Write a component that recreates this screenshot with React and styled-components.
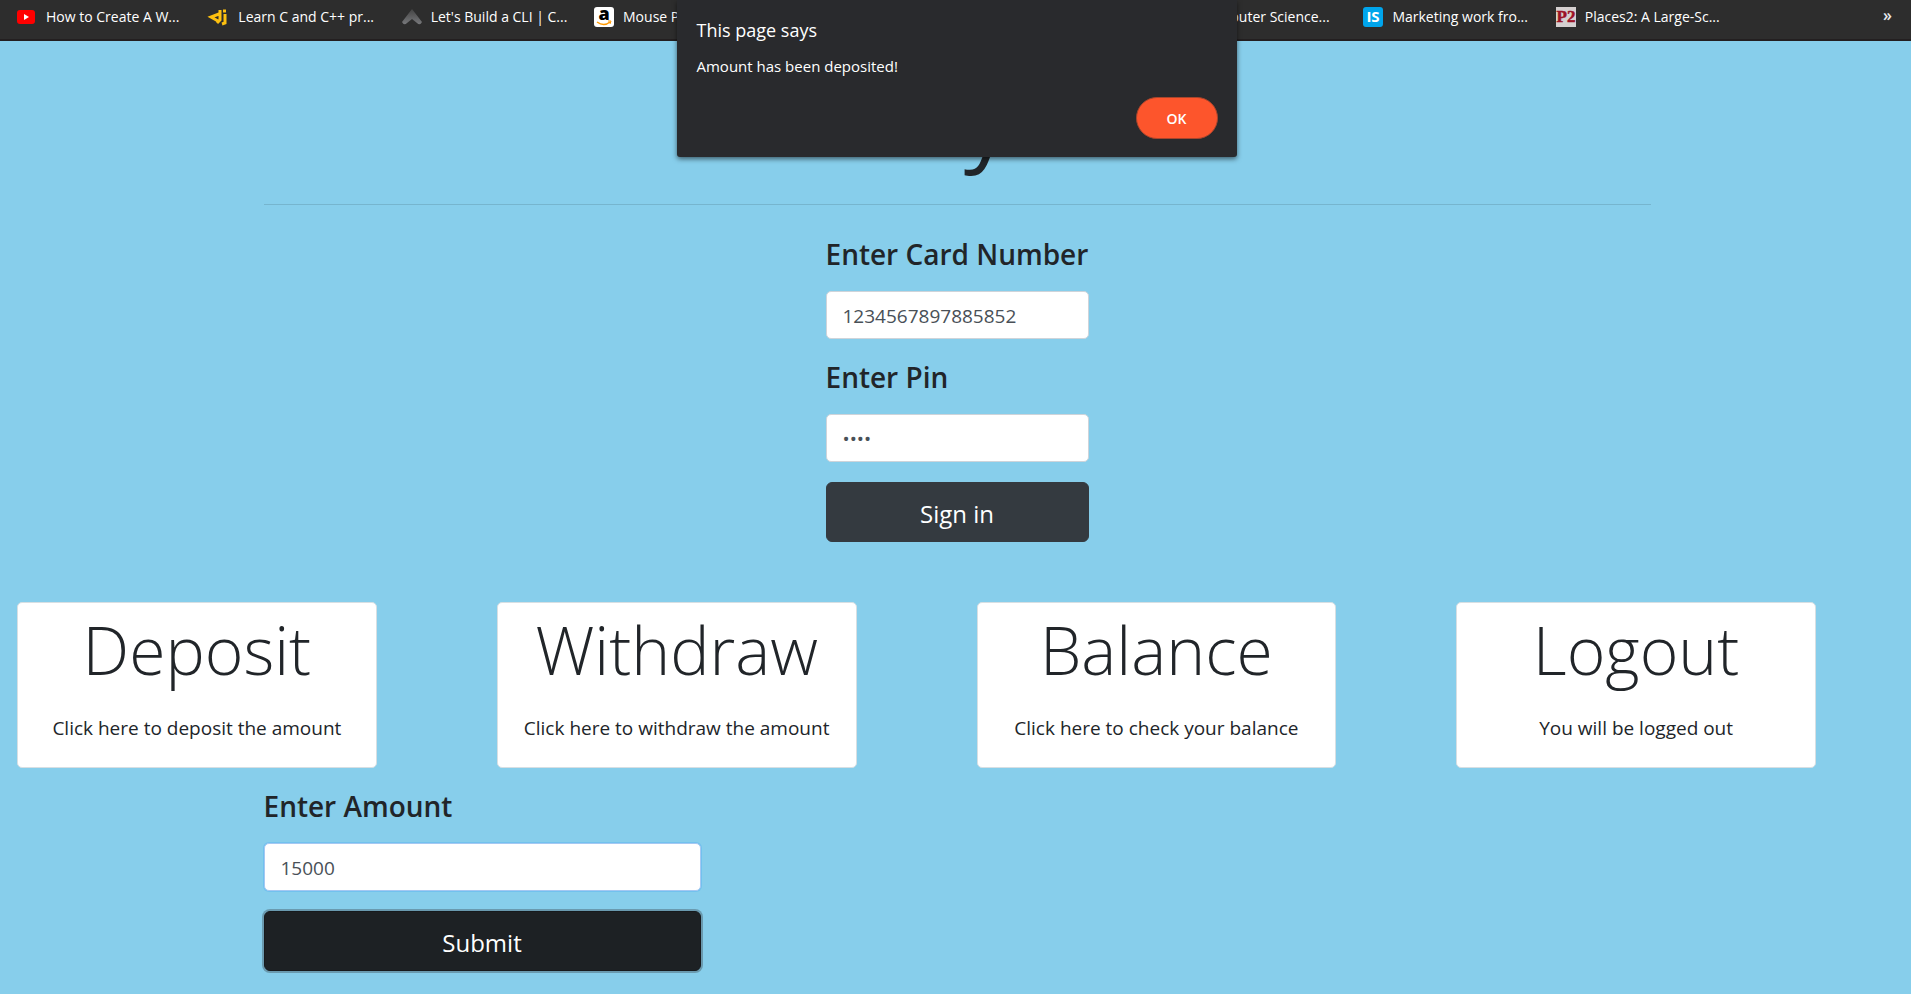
import React from "react";
import styled, { createGlobalStyle } from "styled-components";

const GlobalStyle = createGlobalStyle`
  *, *::before, *::after { box-sizing: border-box; }
  body {
    margin: 0;
    min-height: 100vh;
    background: #87ceeb;
    color: #212529;
    font-family: "Open Sans", "Noto Sans", sans-serif;
    font-size: 18px;
    overflow-x: hidden;
  }
  h1, h2, p { margin: 0; }
  button, input { font-family: inherit; }
`;

const Page = styled.div`
  position: relative;
`;

const BookmarksBar = styled.nav`
  display: flex;
  height: 41px;
  padding: 0 19px 0 17px;
  background: #2d2d2d;
  border-bottom: 2px solid #231f20;
  color: #fff;
  font-size: 14px;
  line-height: 34px;
`;

const BookmarkList = styled.div`
  display: grid;
  grid-template-columns: repeat(9, minmax(0, 1fr));
  flex: 1;
  min-width: 0;
  margin-right: 135px;
`;

const Bookmark = styled.a`
  grid-column: ${(p) => p.$column};
  display: flex;
  gap: 9px;
  height: 34px;
  align-items: center;
  color: inherit;
  text-decoration: none;
  white-space: nowrap;

  svg {
    flex: none;
    overflow: visible;
  }
`;

const MoreButton = styled.button`
  padding: 0;
  border: 0;
  background: none;
  color: #e8eaed;
  height: 30px;
  font-size: 16px;
  font-weight: 600;
  line-height: 30px;
`;

const Dialog = styled.section`
  position: absolute;
  top: 0;
  left: calc(50% + 1px);
  transform: translateX(-50%);
  z-index: 2;
  display: flex;
  flex-direction: column;
  width: 560px;
  height: 157px;
  padding: 17px 19px 18px 20px;
  background: #292a2d;
  border-radius: 0 0 3px 3px;
  box-shadow: 0 2px 5px rgba(0, 0, 0, 0.55);
  color: #fff;
`;

const DialogTitle = styled.h2`
  font-size: 18px;
  font-weight: 400;
  line-height: 26px;
`;

const DialogText = styled.p`
  margin-top: 12px;
  font-size: 15px;
  line-height: 22px;
`;

const DialogButton = styled.button`
  align-self: flex-end;
  width: 82px;
  height: 42px;
  margin-top: auto;
  border: 1px solid #a8452c;
  border-radius: 21px;
  background: #fd552c;
  color: #fff;
  font-size: 14px;
  font-weight: 600;
`;

const Main = styled.main`
  padding-left: 3px;
`;

const Container = styled.div`
  width: calc(100% - 40px);
  max-width: 1387px;
  margin: 0 auto;
`;

const Title = styled.h1`
  padding-top: 28px;
  font-size: 92px;
  font-weight: 400;
  line-height: 100px;
  text-align: center;
  white-space: nowrap;
`;

const Divider = styled.hr`
  height: 1px;
  margin: 35px 0 31px;
  border: 0;
  background: rgba(0, 0, 0, 0.12);
`;

const Form = styled.form`
  display: flex;
  flex-direction: column;
  gap: 20px;
  width: ${(p) => p.$width};
  margin: ${(p) => (p.$centered ? "0 auto" : "0")};
`;

const Field = styled.div`
  display: flex;
  flex-direction: column;
  gap: 19px;
`;

const Label = styled.label`
  font-size: 28px;
  font-weight: 600;
  line-height: 36px;
  white-space: nowrap;
`;

const Input = styled.input`
  width: 100%;
  height: 48px;
  padding: 4px 16px 2px;
  border: 1px solid ${(p) => (p.$active ? "#a5c8f2" : "#ced4da")};
  border-radius: 5px;
  box-shadow: ${(p) => (p.$active ? "0 0 0 1px rgba(0, 123, 255, 0.15)" : "none")};
  outline: none;
  background: #fff;
  color: #495057;
  font-size: 19px;
`;

const SubmitButton = styled.button`
  height: 60px;
  padding: 2px 20px 0;
  border: 1px solid ${(p) => (p.$active ? "#171a1d" : "#343a40")};
  border-radius: 6px;
  background: ${(p) => (p.$active ? "#1d2124" : "#343a40")};
  box-shadow: ${(p) => (p.$active ? "0 0 0 2px rgba(52, 58, 64, 0.35)" : "none")};
  color: #fff;
  font-size: 24px;
`;

const CardRow = styled.div`
  display: grid;
  grid-template-columns: repeat(4, 1fr);
  gap: 120px;
  padding: 0 95px 0 14px;
  margin: 60px 0 20px;
`;

const Card = styled.button`
  min-width: 0;
  padding: 4px 0 24px;
  border: 1px solid #d7dfe3;
  border-radius: 5px;
  background: #fff;
  color: #212529;
  text-align: center;
`;

const CardTitle = styled.span`
  display: block;
  font-size: 66px;
  font-weight: 300;
  line-height: 84px;
`;

const CardText = styled.span`
  display: block;
  margin-top: 22px;
  font-size: 19px;
  line-height: 30px;
`;

const YoutubeIcon = () => (
  <svg width="20" height="20" viewBox="0 0 20 20" aria-hidden="true">
    <rect y="3" width="18" height="14" rx="3" fill="#f00" />
    <path d="M7 7v6l5-3z" fill="#fff" />
  </svg>
);

const DjIcon = () => (
  <svg width="20" height="20" viewBox="0 0 20 20" fill="none" stroke="#fdc00f" strokeWidth="3" aria-hidden="true">
    <path d="M10 7 2 10l7 4M11 3v10l-3 3M16 7v9l-3 1M14 4h3" />
  </svg>
);

const ArrowIcon = () => (
  <svg width="20" height="20" viewBox="0 0 20 20" aria-hidden="true">
    <defs>
      <linearGradient id="arrow" x1="0" y1="0" x2="0" y2="1">
        <stop offset="0" stopColor="#444" />
        <stop offset="1" stopColor="#77787b" />
      </linearGradient>
    </defs>
    <path d="M10 2 0 15q2 4 5 1l5-4 5 4q3 3 5-1z" fill="url(#arrow)" />
  </svg>
);

const AmazonIcon = () => (
  <svg width="20" height="20" viewBox="0 0 20 20" aria-hidden="true">
    <rect width="20" height="20" rx="3" fill="#fff" />
    <text x="10" y="13" textAnchor="middle" fontSize="18" fontWeight="800" fill="#000">a</text>
    <path d="M3 15q7 5 13 0" fill="none" stroke="#f90" strokeWidth="1.500" />
    <path d="M14 14h3l-1 3" fill="none" stroke="#f90" />
  </svg>
);

const ScienceIcon = () => (
  <svg width="20" height="20" viewBox="0 0 20 20" aria-hidden="true">
    <circle cx="10" cy="10" r="9" fill="#777" />
  </svg>
);

const InternIcon = () => (
  <svg width="20" height="20" viewBox="0 0 20 20" aria-hidden="true">
    <rect width="20" height="20" rx="3" fill="#00a5ec" />
    <text x="10" y="15" textAnchor="middle" fontSize="15" fontWeight="700" fill="#fff">IS</text>
  </svg>
);

const PlacesIcon = () => (
  <svg width="20" height="20" viewBox="0 0 20 20" aria-hidden="true">
    <rect width="20" height="20" fill="#d5d0d0" />
    <text x="10" y="15" textAnchor="middle" fontFamily="Liberation Serif, serif" fontSize="17" fontWeight="700" fill="#9c1226" stroke="#9c1226" strokeWidth="0.500">P2</text>
  </svg>
);

const bookmarks = [
  { column: 1, Icon: YoutubeIcon, name: "How to Create A W..." },
  { column: 2, Icon: DjIcon, name: "Learn C and C++ pr..." },
  { column: 3, Icon: ArrowIcon, name: "Let's Build a CLI | C..." },
  { column: 4, Icon: AmazonIcon, name: "Mouse P..." },
  { column: 7, Icon: ScienceIcon, name: "Computer Science..." },
  { column: 8, Icon: InternIcon, name: "Marketing work fro..." },
  { column: 9, Icon: PlacesIcon, name: "Places2: A Large-Sc..." },
];

const actions = [
  { title: "Deposit", text: "Click here to deposit the amount" },
  { title: "Withdraw", text: "Click here to withdraw the amount" },
  { title: "Balance", text: "Click here to check your balance" },
  { title: "Logout", text: "You will be logged out" },
];

const stay = (event) => event.preventDefault();

export default function App() {
  return (
    <Page>
      <GlobalStyle />
      <BookmarksBar aria-label="Bookmarks">
        <BookmarkList>
          {bookmarks.map(({ column, Icon, name }) => (
            <Bookmark key={name} href="#" $column={column}>
              <Icon />
              {name}
            </Bookmark>
          ))}
        </BookmarkList>
        <MoreButton type="button" aria-label="More bookmarks">»</MoreButton>
      </BookmarksBar>

      <Dialog role="alertdialog" aria-labelledby="dialog-title">
        <DialogTitle id="dialog-title">This page says</DialogTitle>
        <DialogText>Amount has been deposited!</DialogText>
        <DialogButton type="button">OK</DialogButton>
      </Dialog>

      <Main>
        <Container>
          <Title>Money Box</Title>
          <Divider />
          <Form $width="263px" $centered onSubmit={stay}>
            <Field>
              <Label htmlFor="card">Enter Card Number</Label>
              <Input id="card" type="text" defaultValue="1234567897885852" />
            </Field>
            <Field>
              <Label htmlFor="pin">Enter Pin</Label>
              <Input id="pin" type="password" defaultValue="1234" />
            </Field>
            <SubmitButton type="submit">Sign in</SubmitButton>
          </Form>
        </Container>

        <CardRow>
          {actions.map(({ title, text }) => (
            <Card key={title} type="button">
              <CardTitle>{title}</CardTitle>
              <CardText>{text}</CardText>
            </Card>
          ))}
        </CardRow>

        <Container>
          <Form $width="437px" onSubmit={stay}>
            <Field>
              <Label htmlFor="amount">Enter Amount</Label>
              <Input id="amount" type="text" defaultValue="15000" $active />
            </Field>
            <SubmitButton type="submit" $active>Submit</SubmitButton>
          </Form>
        </Container>
      </Main>
    </Page>
  );
}
